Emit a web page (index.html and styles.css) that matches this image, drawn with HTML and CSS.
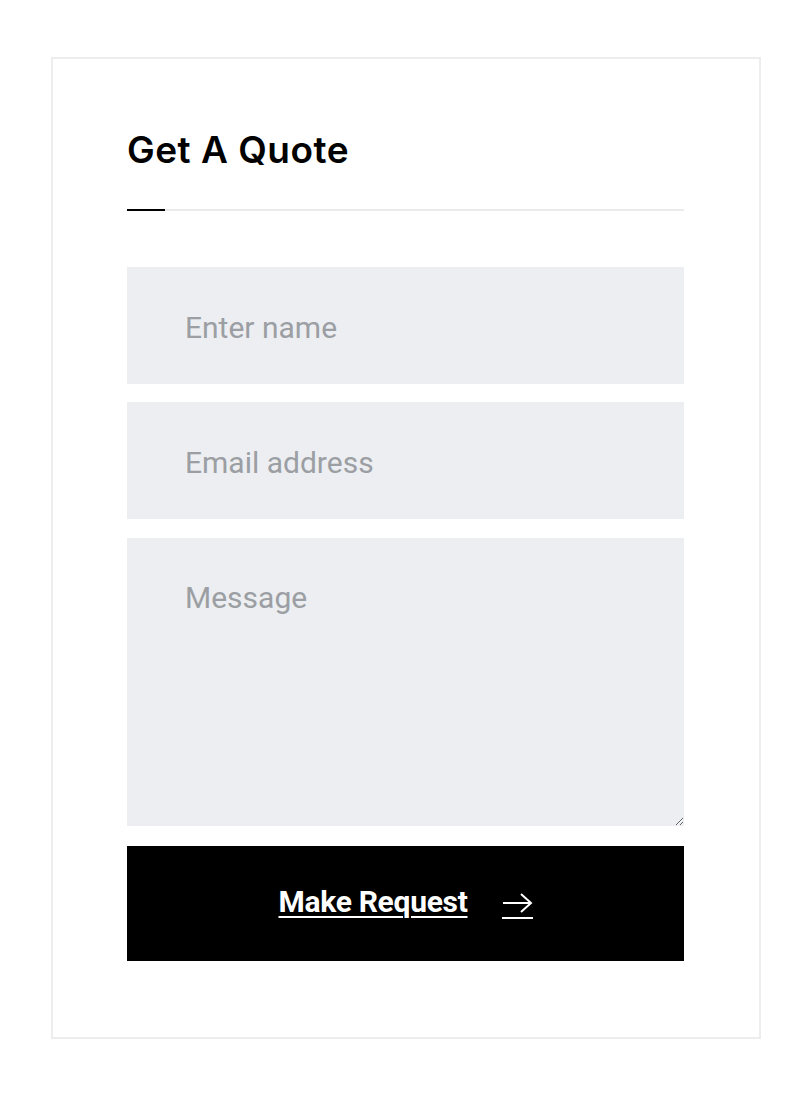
FILE: index.html
```
<!DOCTYPE html>
<html lang="en">
<head>
    <meta charset="UTF-8">
    <meta name="viewport" content="width=device-width, initial-scale=1.0">
    <title>Get A Quote</title>
<link rel="stylesheet" href="styles.css">
</head>
<body>
<div class="quote">
    <h2>Get A Quote</h2>
    <div class="line"></div>
    <form class="quote-form" onsubmit="return false">
        <input type="text" placeholder="Enter name">
        <input type="email" placeholder="Email address">
        <textarea placeholder="Message"></textarea>
        <button type="submit"><span class="txt">Make Request</span><span class="arr"><svg width="31" height="22" viewBox="0 0 31 22"><path d="M1 11H29M19 2l10 9-10 9" fill="none" stroke="#fff" stroke-width="2"/></svg></span></button>
    </form>
</div>
</body>
</html>
```
FILE: styles.css
```
html,body{margin:0;background:#fff;}
.quote{margin:57px 0 0 51px;width:710px;box-sizing:border-box;border:2px solid #ededed;padding:69px 75px 76px 74px;}
.quote h2{margin:0;font-family:Inter,"Noto Sans",sans-serif;font-weight:600;font-size:37px;line-height:44px;color:#000;letter-spacing:0.5px;}
.line{margin:37px 0 56px;height:2px;background:#ebebeb;position:relative;}
.line::before{content:"";position:absolute;left:0;top:0;width:38px;height:2px;background:#000;}
.quote-form{display:flex;flex-direction:column;}
.quote-form input,.quote-form textarea{display:block;width:100%;box-sizing:border-box;border:0;outline:0;background:#eceef1;
font-family:Roboto,sans-serif;font-size:30px;color:#333;padding:0 58px;margin:0 0 18px;}
.quote-form input{height:117px;padding-top:3px;}
.quote-form input+input{margin-bottom:19px;}
.quote-form textarea{height:288px;padding-top:42px;margin-bottom:20px;resize:vertical;}
.quote-form ::placeholder{color:#9b9ea3;opacity:1;}
.quote-form button{height:115px;border:0;background:#000;color:#fff;cursor:pointer;display:flex;align-items:center;justify-content:center;gap:34px;
font-family:Roboto,sans-serif;font-weight:700;font-size:30px;padding:0 0 5px;}
.txt{text-decoration:underline;text-decoration-thickness:2px;text-underline-offset:4px;letter-spacing:-0.3px;}
.arr{display:flex;padding-bottom:3px;border-bottom:2px solid #fff;margin-top:8px;}
```
